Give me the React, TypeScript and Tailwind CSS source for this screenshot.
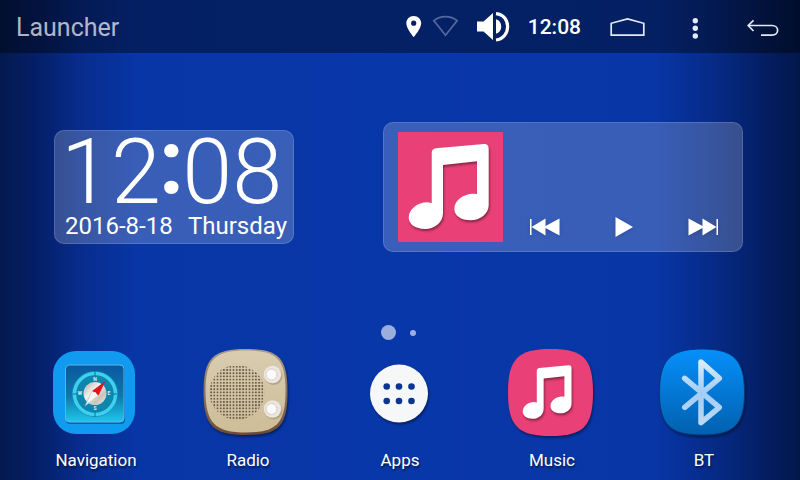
import type { ReactNode } from 'react';

const NOTE =
  'M33.7 21Q33.7 16.8 38 16.3L86 12Q90.7 11.8 90.7 17V73C90.7 82 82 88.3 72.5 88.3C63 88.3 56.3 83.5 56.3 77C56.3 68 66 61.7 75 61.7L79 62V29.3L45 33V81C45 91 36 97 27 97C17 97 10.7 92 10.7 85.5C10.7 77 20 70.3 29 70.3L33.7 71Z';

const shadow = { filter: 'drop-shadow(1px 2px 1px rgba(0,0,0,0.4))' };

function NavigationIcon() {
  return (
    <svg viewBox="0 0 96 96" className="size-24" aria-hidden="true">
      <defs>
        <linearGradient id="navTile" x1="0" y1="0" x2="0" y2="1">
          <stop offset="0" stopColor="#0a58a0" />
          <stop offset="0.55" stopColor="#0b79ac" />
          <stop offset="1" stopColor="#20c6ec" />
        </linearGradient>
        <linearGradient id="navFace" x1="0" y1="0" x2="1" y2="1">
          <stop offset="0" stopColor="#a9a9a4" />
          <stop offset="0.4" stopColor="#f4f2ec" />
          <stop offset="0.7" stopColor="#c9c4ba" />
          <stop offset="1" stopColor="#efece6" />
        </linearGradient>
      </defs>
      <rect x="5" y="6" width="82" height="83" rx="23" fill="#109bf1" />
      <rect x="18" y="21" width="59" height="58" rx="4" fill="#0667ae" />
      <rect x="17.5" y="20" width="58.5" height="57" rx="4" fill="url(#navTile)" stroke="#5fb4e4" strokeWidth="1" />
      <circle cx="47" cy="49" r="23" fill="#1791bd" />
      <circle cx="47" cy="49" r="20.5" fill="#0d86ae" stroke="#3fd0ee" strokeWidth="3.5" />
      <path d="M47 26V31M47 67V72M25 49H29M65 49H69" stroke="#0c6fa0" strokeWidth="1" />
      <circle cx="47" cy="48.5" r="11.5" fill="url(#navFace)" />
      <g fill="#d9f4fb" fontFamily="Roboto, sans-serif" fontSize="5" fontWeight="700" textAnchor="middle">
        <text x="47" y="36">N</text>
        <text x="47" y="65">S</text>
        <text x="32" y="50">W</text>
        <text x="61" y="50">E</text>
      </g>
      <path d="M57.5 36L50.5 50.5L44 46Z" fill="#e3151c" />
      <path d="M37 61L44 46L50.5 50.5Z" fill="#f6f4f0" stroke="#b3aea6" strokeWidth="0.5" />
      <circle cx="47" cy="48.5" r="1.3" fill="#fff" />
    </svg>
  );
}

function RadioIcon() {
  return (
    <svg viewBox="0 0 96 96" className="size-24" aria-hidden="true">
      <defs>
        <pattern id="grille" x="35.1" y="45.7" width="3.2" height="3.2" patternUnits="userSpaceOnUse">
          <rect x="0.7" y="0.7" width="1.8" height="1.8" rx="0.6" fill="#625744" />
        </pattern>
        <linearGradient id="wood" x1="0" y1="0" x2="0" y2="1">
          <stop offset="0" stopColor="#a99c8c" />
          <stop offset="1" stopColor="#6d4a38" />
        </linearGradient>
        <linearGradient id="cream" x1="0" y1="0" x2="0" y2="1">
          <stop offset="0" stopColor="#d9ccb0" />
          <stop offset="1" stopColor="#cdbd98" />
        </linearGradient>
      </defs>
      <path
        d="M46 4C79 4 87.5 13 87.5 47S79 90 46 90S3.5 81 3.5 47S13 4 46 4Z"
        fill="url(#wood)"
        style={shadow}
      />
      <path d="M46 5.5C77 5.5 85.5 14 85.5 46S77 87.500 46 87.500S5.5 78 5.5 46S15 5.5 46 5.5Z" fill="url(#cream)" />
      <circle cx="37" cy="47.3" r="27.5" fill="url(#grille)" />
      {[29.5, 64].map((cy) => (
        <g key={cy}>
          <circle cx="73.5" cy={cy + 1.5} r="9" fill="#9c8d72" opacity="0.6" />
          <circle cx="72.5" cy={cy} r="8.7" fill="#ebe6df" />
          <circle cx="71.5" cy={cy} r="5.5" fill="#fbfaf8" stroke="#d5cfc6" strokeWidth="1" />
        </g>
      ))}
    </svg>
  );
}

function AppsIcon() {
  return (
    <svg viewBox="0 0 96 96" className="size-24" aria-hidden="true">
      <circle cx="47" cy="48.5" r="29" fill="#f6f7f9" style={shadow} />
      {[41.5, 56].map((cy) =>
        [34.7, 47, 59.5].map((cx) => <circle key={`${cx}-${cy}`} cx={cx} cy={cy} r="3.3" fill="#0a3590" />),
      )}
    </svg>
  );
}

function MusicIcon() {
  return (
    <svg viewBox="0 0 96 96" className="size-24" aria-hidden="true">
      <path d="M46.5 4C79 4 89 13 89 47.5S79 91 46.5 91S4 81 4 47.5S14 4 46.5 4Z" fill="#e84077" style={shadow} />
      <g style={shadow}>
        <path d={NOTE} fill="#fff" transform="translate(12.2 12.7) scale(0.61 0.63)" />
      </g>
    </svg>
  );
}

function BluetoothIcon() {
  return (
    <svg viewBox="0 0 96 96" className="size-24" aria-hidden="true">
      <defs>
        <linearGradient id="btTile" x1="0" y1="0" x2="0" y2="1">
          <stop offset="0" stopColor="#0690fb" />
          <stop offset="1" stopColor="#0160ae" />
        </linearGradient>
        <linearGradient id="btRune" x1="0" y1="0" x2="0" y2="1">
          <stop offset="0" stopColor="#d9ecfc" />
          <stop offset="0.5" stopColor="#a2cdf4" />
          <stop offset="1" stopColor="#b9d8f3" />
        </linearGradient>
      </defs>
      <path
        d="M46 4C78 4 88.5 15 88.5 47.5S78 90 46 90S3.5 80 3.5 47.5S14 4 46 4Z"
        fill="url(#btTile)"
        stroke="#023a80"
        strokeWidth="1"
        style={shadow}
      />
      <path
        d="M28.7 33.3L63.3 62.3L45 77.7V17L63.3 33.3L28.7 62.3"
        fill="none"
        stroke="url(#btRune)"
        strokeWidth="5.5"
        strokeLinecap="round"
        strokeLinejoin="round"
      />
    </svg>
  );
}

const APPS: { name: string; icon: ReactNode }[] = [
  { name: 'Navigation', icon: <NavigationIcon /> },
  { name: 'Radio', icon: <RadioIcon /> },
  { name: 'Apps', icon: <AppsIcon /> },
  { name: 'Music', icon: <MusicIcon /> },
  { name: 'BT', icon: <BluetoothIcon /> },
];

function StatusBar() {
  return (
    <header className="flex h-[53px] items-center bg-black/40 pr-[3px] pl-4">
      <h1 className="flex-1 pt-0.5 text-[25px] text-white/70">Launcher</h1>

      <div className="mr-3 flex items-center">
        <svg viewBox="0 0 16 31" className="mr-2.5 h-[31px] w-4" fill="#fff" aria-hidden="true">
          <path
            fillRule="evenodd"
            d="M7.7 5C3.5 5 0.3 8.2 0.3 12.2C0.3 17.5 7.7 26 7.7 26S15.2 17.5 15.2 12.2C15.2 8.2 11.9 5 7.7 5ZM7.7 9.6A2.6 2.6 0 1 1 7.7 14.8A2.6 2.6 0 1 1 7.7 9.6Z"
          />
        </svg>
        <svg viewBox="0 0 28 31" className="mr-4 h-[31px] w-7" fill="none" stroke="#5468a0" strokeWidth="1.7" aria-hidden="true">
          <path d="M1.8 9.6C8.5 4.2 18.5 4.2 25.2 9.6L13.5 24.2Z" />
        </svg>
        <svg viewBox="0 0 34 31" className="mr-[18px] h-[31px] w-[34px]" aria-hidden="true">
          <path d="M1 10.5H7.5L17 2V29L7.5 20.5H1Z" fill="#fff" />
          <path d="M20 8.2C27 10 27 21 20 22.8Z" fill="#fff" />
          <path d="M20 2.600C35.5 4 35.5 27 20 29" fill="none" stroke="#fff" strokeWidth="3.2" />
        </svg>
        <time className="pt-0.5 text-[21px] font-medium">12:08</time>
      </div>

      <button type="button" aria-label="Home" className="flex w-[68px] justify-center">
        <svg viewBox="0 0 36 31" className="h-[31px] w-9" fill="none" stroke="#e3e8f5" strokeWidth="1.7" aria-hidden="true">
          <path d="M2.2 24.2V12.3L18.5 8L34.8 12.3V24.2Z" />
        </svg>
      </button>
      <button type="button" aria-label="Menu" className="flex w-[68px] justify-center">
        <svg viewBox="0 0 10 31" className="h-[31px] w-2.5" fill="#e3e8f5" aria-hidden="true">
          <circle cx="5.3" cy="9.7" r="2.7" />
          <circle cx="5.3" cy="17.3" r="2.7" />
          <circle cx="5.3" cy="25" r="2.7" />
        </svg>
      </button>
      <button type="button" aria-label="Back" className="flex w-[68px] justify-center">
        <svg viewBox="0 0 34 31" className="h-[31px] w-[34px]" fill="none" stroke="#e3e8f5" strokeWidth="1.7" aria-hidden="true">
          <path d="M7.5 9.3L2.2 14.5L7.5 20M2.2 14.5H26C33.5 14.5 33.5 24.2 26 24.2H15" />
        </svg>
      </button>
    </header>
  );
}

function ClockWidget() {
  return (
    <section className="h-[114px] w-60 rounded-[10px] border border-white/15 bg-white/20">
      <div className="flex h-[84px] items-start pl-1.5 text-[90px] leading-[84px] font-light">
        <span>12</span>
        <span className="-mx-0.5 leading-[66px] font-bold">:</span>
        <span>08</span>
      </div>
      <p className="flex justify-between pr-1.5 pl-2.5 text-2xl leading-[22px]">
        <span>2016-8-18</span>
        <span>Thursday</span>
      </p>
    </section>
  );
}

function MusicWidget() {
  return (
    <section className="flex h-[130px] w-[360px] items-end rounded-[10px] border border-white/15 bg-white/20 py-[9px] pl-[14px]">
      <svg viewBox="0 0 105 110" className="h-[110px] w-[105px] bg-[#e84077]" role="img" aria-label="Album cover">
        <path d={NOTE} fill="#fff" style={shadow} />
      </svg>
      <div className="grid flex-1 grid-cols-3 pl-0.5">
        <button type="button" aria-label="Previous" className="flex h-[30px] items-center justify-center">
          <svg viewBox="0 0 30 20" className="h-5 w-[30px] drop-shadow-sm" fill="#fff" aria-hidden="true">
            <path d="M0 2H1.5V18H0ZM1.5 10L15.5 1.5V9L29.5 1.5V18.5L15.5 11V18.5Z" />
          </svg>
        </button>
        <button type="button" aria-label="Play" className="flex h-[30px] items-center justify-center">
          <svg viewBox="0 0 18 20" className="h-5 w-[18px] drop-shadow-sm" fill="#fff" aria-hidden="true">
            <path d="M0.5 0L18 10L0.5 20Z" />
          </svg>
        </button>
        <button type="button" aria-label="Next" className="flex h-[30px] items-center justify-center">
          <svg viewBox="0 0 30 20" className="h-5 w-[30px] drop-shadow-sm" fill="#fff" aria-hidden="true">
            <path d="M30 2H28.5V18H30ZM28.5 10L14.5 1.5V9L0.5 1.5V18.5L14.5 11V18.5Z" />
          </svg>
        </button>
      </div>
    </section>
  );
}

export default function App() {
  return (
    <div className="flex min-h-screen flex-col bg-[linear-gradient(90deg,#03194f_0%,#04206a_5%,#072c8c_10%,#0836a6_17%,#0837a9_50%,#0836a6_82%,#062b88_89%,#031d60_96%,#03174c_100%)] font-['Roboto',sans-serif] text-white">
      <StatusBar />

      <main className="flex flex-1 items-center justify-between pr-[57px] pl-[54px]">
        <ClockWidget />
        <MusicWidget />
      </main>

      <div className="flex h-[25px] items-center justify-center gap-[14px] pr-1">
        <span className="size-[15px] rounded-full bg-white/60" />
        <span className="size-1.5 rounded-full bg-white/60" />
      </div>

      <nav className="grid grid-cols-5 px-5 pb-2">
        {APPS.map((app) => (
          <button key={app.name} type="button" className="flex flex-col items-center gap-[7px]">
            {app.icon}
            <span className="text-[17px] leading-6 [text-shadow:1px_2px_2px_rgba(0,0,0,0.5)]">{app.name}</span>
          </button>
        ))}
      </nav>
    </div>
  );
}
